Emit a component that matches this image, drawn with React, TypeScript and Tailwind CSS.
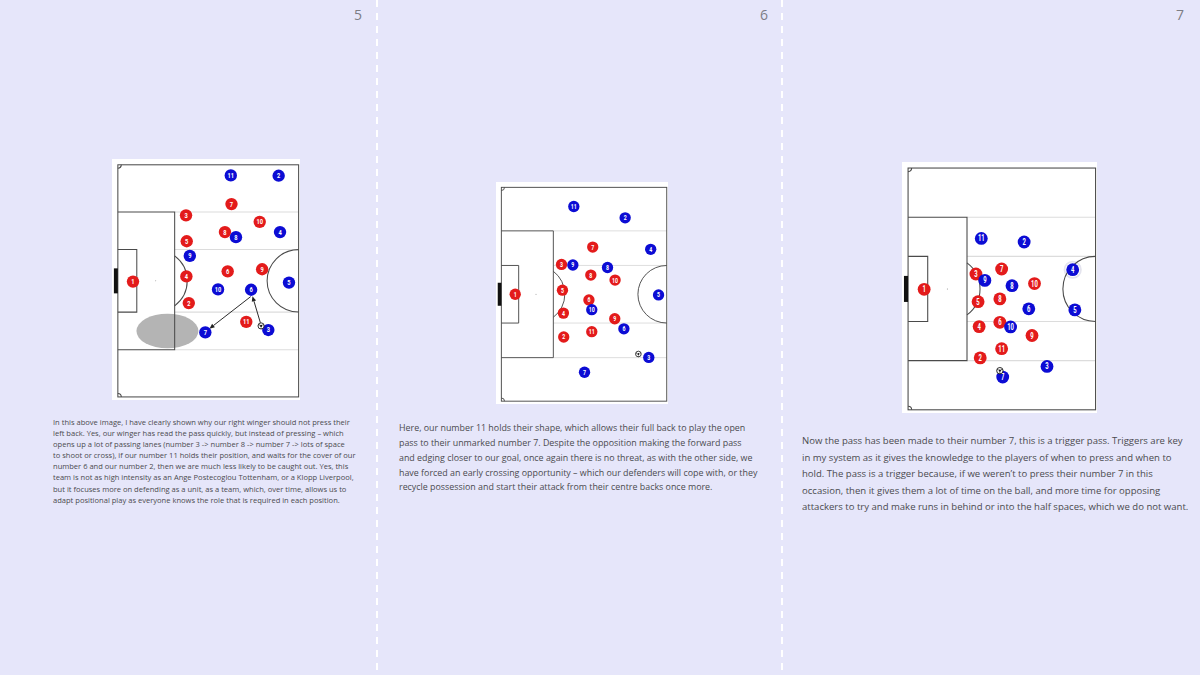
import React from "react";

const RED = "#e31b1b";
const BLUE = "#0c0cd4";

type P = [number, number, string];

function Player({ x, y, n, color }: { x: number; y: number; n: string; color: string }) {
  return (
    <g>
      <circle cx={x} cy={y} r={1.8} fill={color} />
      <g transform={`translate(${x} ${y}) scale(0.72 1)`}>
        <text
          x={0}
          y={0.05}
          fill="#ffffff"
          fontSize={2.3}
          fontWeight={700}
          textAnchor="middle"
          dominantBaseline="central"
          style={{ fontFamily: "Roboto, 'Liberation Sans', sans-serif" }}
        >
          {n}
        </text>
      </g>
    </g>
  );
}

function Ball({ x, y }: { x: number; y: number }) {
  return (
    <g>
      <circle cx={x} cy={y} r={0.9} fill="#ffffff" stroke="#111" strokeWidth={0.25} />
      <circle cx={x} cy={y} r={0.32} fill="#111" />
      <circle cx={x - 0.55} cy={y - 0.3} r={0.16} fill="#111" />
      <circle cx={x + 0.55} cy={y - 0.3} r={0.16} fill="#111" />
      <circle cx={x} cy={y + 0.62} r={0.16} fill="#111" />
    </g>
  );
}

function Arrow({ x1, y1, x2, y2 }: { x1: number; y1: number; x2: number; y2: number }) {
  const a = Math.atan2(y2 - y1, x2 - x1);
  const L = 1.5;
  const W = 0.65;
  const bx = x2 - L * Math.cos(a);
  const by = y2 - L * Math.sin(a);
  const px = -Math.sin(a) * W;
  const py = Math.cos(a) * W;
  return (
    <g>
      <line x1={x1} y1={y1} x2={bx} y2={by} stroke="#222" strokeWidth={0.28} />
      <polygon points={`${x2},${y2} ${bx + px},${by + py} ${bx - px},${by - py}`} fill="#222" />
    </g>
  );
}

function Pitch({
  w,
  h,
  reds,
  blues,
  ball,
  under,
  over,
}: {
  w: number;
  h: number;
  reds: P[];
  blues: P[];
  ball: [number, number];
  under?: React.ReactNode;
  over?: React.ReactNode;
}) {
  const line = "#4a4a4a";
  const light = "#dcdcdc";
  return (
    <svg
      width={w}
      height={h}
      viewBox="-1.7 -1.7 54.6 70.6"
      preserveAspectRatio="none"
      className="block bg-white"
    >
      <rect x={-1.7} y={-1.7} width={54.6} height={70.6} fill="#ffffff" />
      {under}
      <line x1={16.5} y1={13.84} x2={52.5} y2={13.84} stroke={light} strokeWidth={0.3} />
      <line x1={16.5} y1={24.84} x2={52.5} y2={24.84} stroke={light} strokeWidth={0.3} />
      <line x1={16.5} y1={43.16} x2={52.5} y2={43.16} stroke={light} strokeWidth={0.3} />
      <line x1={16.5} y1={54.16} x2={52.5} y2={54.16} stroke={light} strokeWidth={0.3} />
      <rect x={0} y={0} width={52.5} height={68} fill="none" stroke={line} strokeWidth={0.3} />
      <path d="M0 13.84 H16.5 V54.16 H0" fill="none" stroke={line} strokeWidth={0.3} />
      <path d="M0 24.84 H5.5 V43.16 H0" fill="none" stroke={line} strokeWidth={0.3} />
      <rect x={-1.15} y={30.34} width={1.15} height={7.32} fill="#111" />
      <circle cx={11} cy={34} r={0.13} fill={line} />
      <path d="M16.5 26.69 A9.15 9.15 0 0 1 16.5 41.31" fill="none" stroke={line} strokeWidth={0.3} />
      <path d="M52.5 24.85 A9.15 9.15 0 0 0 52.5 43.15" fill="none" stroke={line} strokeWidth={0.3} />
      <path d="M0 1 A1 1 0 0 0 1 0" fill="none" stroke={line} strokeWidth={0.3} />
      <path d="M1 68 A1 1 0 0 0 0 67" fill="none" stroke={line} strokeWidth={0.3} />
      {over}
      {reds.map(([x, y, n]) => (
        <Player key={"r" + n} x={x} y={y} n={n} color={RED} />
      ))}
      {blues.map(([x, y, n]) => (
        <Player key={"b" + n} x={x} y={y} n={n} color={BLUE} />
      ))}
      <Ball x={ball[0]} y={ball[1]} />
    </svg>
  );
}

const p1Blues: P[] = [
  [32.8, 3.1, "11"],
  [46.7, 3.2, "2"],
  [34.3, 21.2, "8"],
  [47.1, 19.7, "4"],
  [20.9, 26.7, "9"],
  [49.7, 34.5, "5"],
  [29.1, 36.5, "10"],
  [38.7, 36.6, "6"],
  [25.4, 49.1, "7"],
  [43.7, 48.4, "3"],
];
const p1Reds: P[] = [
  [4.4, 34.2, "1"],
  [33.0, 11.5, "7"],
  [19.8, 14.8, "3"],
  [41.2, 16.7, "10"],
  [31.1, 19.7, "8"],
  [20.0, 22.4, "5"],
  [31.9, 31.2, "6"],
  [41.9, 30.6, "9"],
  [19.9, 32.7, "4"],
  [20.6, 40.5, "2"],
  [37.3, 46.0, "11"],
];

const p2Blues: P[] = [
  [23.0, 6.1, "11"],
  [39.3, 9.7, "2"],
  [47.4, 19.7, "4"],
  [22.7, 24.7, "9"],
  [33.7, 25.5, "8"],
  [49.9, 34.2, "5"],
  [28.7, 38.9, "10"],
  [38.9, 45.0, "6"],
  [46.8, 54.1, "3"],
  [26.4, 58.8, "7"],
];
const p2Reds: P[] = [
  [4.4, 34.0, "1"],
  [29.0, 19.0, "7"],
  [19.1, 24.5, "3"],
  [28.4, 27.9, "8"],
  [36.1, 29.5, "10"],
  [19.4, 32.7, "5"],
  [27.8, 35.8, "6"],
  [19.7, 40.0, "4"],
  [36.0, 41.8, "9"],
  [28.7, 45.9, "11"],
  [19.8, 47.6, "2"],
];

const p3Blues: P[] = [
  [20.5, 19.8, "11"],
  [32.5, 20.8, "2"],
  [46.1, 28.6, "4"],
  [21.5, 31.6, "9"],
  [29.1, 33.1, "8"],
  [33.8, 39.6, "6"],
  [46.7, 39.9, "5"],
  [28.7, 44.7, "10"],
  [38.9, 55.8, "3"],
  [26.5, 58.8, "7"],
];
const p3Reds: P[] = [
  [4.5, 34.1, "1"],
  [26.2, 28.4, "7"],
  [19.0, 29.8, "3"],
  [35.4, 32.5, "10"],
  [19.6, 37.6, "5"],
  [25.7, 36.8, "8"],
  [25.7, 43.4, "6"],
  [19.9, 44.6, "4"],
  [34.7, 47.1, "9"],
  [26.2, 50.8, "11"],
  [20.2, 53.4, "2"],
];

const text1 = [
  "In this above image, I have clearly shown why our right winger should not press their",
  "left back. Yes, our winger has read the pass quickly, but instead of pressing – which",
  "opens up a lot of passing lanes (number 3 -> number 8 -> number 7 -> lots of space",
  "to shoot or cross), if our number 11 holds their position, and waits for the cover of our",
  "number 6 and our number 2, then we are much less likely to be caught out. Yes, this",
  "team is not as high intensity as an Ange Postecoglou Tottenham, or a Klopp Liverpool,",
  "but it focuses more on defending as a unit, as a team, which, over time, allows us to",
  "adapt positional play as everyone knows the role that is required in each position.",
];
const text2 = [
  "Here, our number 11 holds their shape, which allows their full back to play the open",
  "pass to their unmarked number 7. Despite the opposition making the forward pass",
  "and edging closer to our goal, once again there is no threat, as with the other side, we",
  "have forced an early crossing opportunity – which our defenders will cope with, or they",
  "recycle possession and start their attack from their centre backs once more.",
];
const text3 = [
  "Now the pass has been made to their number 7, this is a trigger pass. Triggers are key",
  "in my system as it gives the knowledge to the players of when to press and when to",
  "hold. The pass is a trigger because, if we weren’t to press their number 7 in this",
  "occasion, then it gives them a lot of time on the ball, and more time for opposing",
  "attackers to try and make runs in behind or into the half spaces, which we do not want.",
];

function Divider() {
  return (
    <div className="h-full w-[2px] shrink-0 bg-[repeating-linear-gradient(to_bottom,#ffffff_0px,#ffffff_7px,transparent_7px,transparent_13px)]" />
  );
}

export default function App() {
  const font = { fontFamily: "'Open Sans', 'Noto Sans', sans-serif" };
  return (
    <div className="flex h-[675px] w-[1200px] overflow-hidden bg-[#e6e6fa]">
      <div className="flex w-[376px] shrink-0 flex-col">
        <div className="flex h-[23px] justify-end pr-[14px] pt-[7px] text-[14px] leading-[16px] text-[#7d7d85]" style={font}>
          5
        </div>
        <div className="ml-[112px] mt-[136px]">
          <Pitch
            w={188}
            h={241}
            reds={p1Reds}
            blues={p1Blues}
            ball={[41.6, 47.2]}
            under={<ellipse cx={14.4} cy={48.7} rx={9} ry={5.05} fill="#b4b4b4" />}
            over={
              <g>
                <Arrow x1={38.6} y1={38.6} x2={26.6} y2={48.0} />
                <Arrow x1={41.4} y1={46.3} x2={39.1} y2={38.5} />
              </g>
            }
          />
        </div>
        <div className="ml-[53px] mt-[17px] text-[7.55px] leading-[11.1px] text-[#4b4b4f]" style={font}>
          {text1.map((t, i) => (
            <div key={i} className="whitespace-nowrap">
              {t}
            </div>
          ))}
        </div>
      </div>
      <Divider />
      <div className="flex w-[403px] shrink-0 flex-col">
        <div className="flex h-[23px] justify-end pr-[13px] pt-[7px] text-[14px] leading-[16px] text-[#7d7d85]" style={font}>
          6
        </div>
        <div className="ml-[118px] mt-[159px]">
          <Pitch w={172} h={222} reds={p2Reds} blues={p2Blues} ball={[43.5, 53.0]} />
        </div>
        <div className="ml-[21px] mt-[17px] text-[8.88px] leading-[14.85px] text-[#4b4b4f]" style={font}>
          {text2.map((t, i) => (
            <div key={i} className="whitespace-nowrap">
              {t}
            </div>
          ))}
        </div>
      </div>
      <Divider />
      <div className="flex min-w-0 flex-1 flex-col">
        <div className="flex h-[23px] justify-end pr-[16px] pt-[7px] text-[14px] leading-[16px] text-[#7d7d85]" style={font}>
          7
        </div>
        <div className="ml-[119px] mt-[139px]">
          <Pitch
            w={195}
            h={251}
            reds={p3Reds}
            blues={p3Blues}
            ball={[25.7, 57.0]}
            under={<circle cx={46.1} cy={28.6} r={2.3} fill="none" stroke="#e4e4ee" strokeWidth={0.5} />}
          />
        </div>
        <div className="ml-[19px] mt-[20px] text-[9.55px] leading-[16.5px] text-[#4b4b4f]" style={font}>
          {text3.map((t, i) => (
            <div key={i} className="whitespace-nowrap">
              {t}
            </div>
          ))}
        </div>
      </div>
    </div>
  );
}
